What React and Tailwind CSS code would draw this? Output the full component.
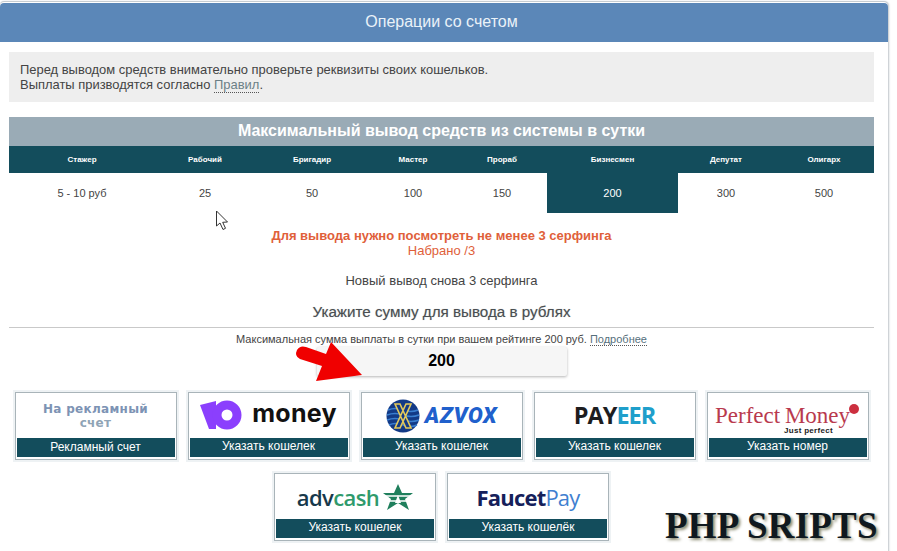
const levels = [
  ["Стажер", "5 - 10 руб"],
  ["Рабочий", "25"],
  ["Бригадир", "50"],
  ["Мастер", "100"],
  ["Прораб", "150"],
  ["Бизнесмен", "200", true],
  ["Депутат", "300"],
  ["Олигарх", "500"],
];

const cols = "grid grid-cols-[146px_100px_114px_88px_90px_131px_96px_100px]";

function Card({ label, children, barClass = "" }) {
  return (
    <div className="w-[162px] h-[68px] border border-[#a9b4b9] bg-white p-px shadow-[0_0_0_2px_#eef2f4] flex flex-col">
      <div className="h-[44px] flex items-center justify-center overflow-hidden">{children}</div>
      <div className={`h-[19px] bg-[#134d5c] text-white text-[12px] leading-[17px] text-center ${barClass}`}>{label}</div>
    </div>
  );
}

function YooMoney() {
  return (
    <div className="flex items-center gap-[10px] -mt-[3px]">
      <svg width="42" height="30" viewBox="0 0 42 30">
        <path d="M0 5 L16 1 L16 29 L9 29 Z" fill="#8b3ffd" />
        <circle cx="27" cy="15" r="10" fill="none" stroke="#8b3ffd" strokeWidth="9" />
      </svg>
      <span className="font-['Inter',sans-serif] font-bold text-[25px] leading-none text-[#111] tracking-[0.3px] pb-[3px]">money</span>
    </div>
  );
}

function Azvox() {
  return (
    <div className="flex items-center gap-[5px]">
      <svg width="34" height="34" viewBox="0 0 34 34">
        <circle cx="17" cy="17" r="16.5" fill="#123a86" />
        <path d="M2 11 Q9 8 17 11 T32 11 M1 16 Q9 13 17 16 T33 16 M1 21 Q9 18 17 21 T33 21 M3 26 Q9 23 17 26 T31 26" fill="none" stroke="#3a7fd0" strokeWidth="1.5" />
        <path d="M9 5 L14 5 L25 29 L20 29 Z M20 5 L25 5 L14 29 L9 29 Z" fill="#123a86" stroke="#e3c95b" strokeWidth="1.6" />
      </svg>
      <span className="font-['Roboto',sans-serif] font-black italic text-[22px] leading-none text-[#2060cc] tracking-[0.6px]">AZVOX</span>
    </div>
  );
}

function Payeer() {
  return (
    <span className="font-['Open_Sans',sans-serif] font-bold text-[23.5px] leading-none tracking-[-1px]">
      <span className="text-[#1d1d1f]">PAY</span>
      <span className="text-[#1f9fcb]">EER</span>
    </span>
  );
}

function PerfectMoney() {
  return (
    <div className="relative w-[145px] h-[40px] -mt-[1px] font-['Liberation_Serif',serif] text-[#b93a4e]">
      <span className="absolute left-0 top-[9px] text-[23px] leading-[21px] whitespace-nowrap [word-spacing:-1px]">Perfect Money</span>
      <span className="absolute left-[69px] top-[31px] font-['Liberation_Sans',sans-serif] font-bold text-[8px] leading-none tracking-[0.3px] text-[#222] whitespace-nowrap">Just perfect</span>
      <span className="absolute left-[134px] top-[8px] w-[10px] h-[10px] rounded-full bg-[#cc2f3f]" />
    </div>
  );
}

function Advcash() {
  return (
    <div className="flex items-center gap-[4px]">
      <span className="font-['Open_Sans',sans-serif] font-semibold text-[22px] leading-none tracking-[-0.6px]">
        <span className="text-[#17394b]">adv</span>
        <span className="text-[#2f9a6c]">cash</span>
      </span>
      <svg width="30" height="27" viewBox="0 0 30 27">
        <path d="M15 0 L19 9 L30 9 L22 15 L26 26 L15 19 L4 26 L8 15 L0 9 L11 9 Z" fill="#1f7f5c" />
        <path d="M0 12 H30 M2 17 H28" stroke="#fff" strokeWidth="1.4" />
        <path d="M15 11 L12 19 H18 Z" fill="#fff" />
      </svg>
    </div>
  );
}

function FaucetPay() {
  return (
    <span className="font-['Open_Sans',sans-serif] text-[22px] leading-none tracking-[-0.8px]">
      <span className="font-bold text-[#15205a]">Faucet</span>
      <span className="text-[#3f80d0]">Pay</span>
    </span>
  );
}

export default function App() {
  return (
    <div className="relative w-[897px] h-[551px] overflow-hidden bg-white font-['Liberation_Sans',Arial,sans-serif] text-[#444]">
      <div className="w-[888px] h-[600px] mt-[2px] rounded-t-[4px] shadow-[1px_0_2px_#bfc5ca,0_-1px_1px_#c4cad0] pt-px">
        <div className="h-[39px] bg-[#5b87b8] rounded-t-[4px] pr-[5px] text-[#eaf2f8] text-[16px] leading-[38px] text-center">
          Операции со счетом
        </div>

        <div className="ml-[9px] mr-[14px]">
          <div className="mt-[10px] h-[50px] bg-[#eeeeee] px-[11px] pt-[10px] text-[12.95px] leading-[15px]">
            Перед выводом средств внимательно проверьте реквизиты своих кошельков.
            <br />
            Выплаты призводятся согласно{" "}
            <a className="text-[#6b7f86] border-b border-dotted border-[#555]">Правил</a>.
          </div>

          <div className="mt-[15px]">
            <div className="h-[29px] bg-[#9aabb6] text-white font-bold text-[16px] leading-[28px] text-center">
              Максимальный вывод средств из системы в сутки
            </div>
            <div className={`${cols} h-[27px] bg-[#134d5c] text-white font-bold text-[8px] leading-[27px] text-center`}>
              {levels.map(([name]) => (
                <div key={name}>{name}</div>
              ))}
            </div>
            <div className={`${cols} h-[40px] text-[11px] leading-[40px] text-center`}>
              {levels.map(([name, val, active]) => (
                <div key={name} className={active ? "bg-[#134d5c] text-white" : ""}>{val}</div>
              ))}
            </div>
          </div>

          <div className="mt-[15px] text-center text-[#e0603a] text-[13px] leading-[15px]">
            <div className="font-bold">Для вывода нужно посмотреть не менее 3 серфинга</div>
            <div>Набрано /3</div>
          </div>
          <div className="mt-[15px] text-center text-[13px] leading-[15px]">Новый вывод снова 3 серфинга</div>
          <div className="mt-[15px] text-center text-[15.2px] leading-[18px] text-[#4a4f52] [text-shadow:0_0_1px_#bbb]">Укажите сумму для вывода в рублях</div>

          <div className="mt-[6px] border-t border-[#c9c9c9] pt-[5px] text-center text-[11px] leading-[13px]">
            Максимальная сумма выплаты в сутки при вашем рейтинге 200 руб.{" "}
            <a className="text-[#56707c] border-b border-dotted border-[#555]">Подробнее</a>
          </div>

          <div className="mx-auto mt-[1px] w-[250px] h-[29px] bg-[#f6f6f6] rounded-[2px] shadow-[0_1px_3px_#b5b5b5] text-black font-bold text-[16px] leading-[28px] text-center">
            200
          </div>

          <div className="mt-[16px] flex flex-wrap justify-center gap-x-[11px] gap-y-[13px]">
            <Card label="Рекламный счет" barClass="pt-px">
              <div className="font-['DejaVu_Sans',sans-serif] font-bold text-[12px] leading-[14px] tracking-[0.3px] text-center text-[#7d93b4]">
                На рекламный<br /><span className="text-[#8fa4b6]">счет</span>
              </div>
            </Card>
            <Card label="Указать кошелек"><YooMoney /></Card>
            <Card label="Указать кошелек"><Azvox /></Card>
            <Card label="Указать кошелек"><Payeer /></Card>
            <Card label="Указать номер"><PerfectMoney /></Card>
            <Card label="Указать кошелек"><Advcash /></Card>
            <Card label="Указать кошелёк"><FaucetPay /></Card>
          </div>
        </div>
      </div>

      {/* mouse pointer */}
      <svg className="absolute left-[215px] top-[210px]" width="16" height="21" viewBox="0 0 16 21">
        <path d="M1.5 1 V16 L5 13 L8 19.5 L10.5 18.3 L7.7 12.3 L12.5 12 Z" fill="#fff" stroke="#333" strokeWidth="1" />
      </svg>

      {/* red annotation arrow */}
      <svg className="absolute left-[290px] top-[335px]" width="80" height="52" viewBox="0 0 80 52">
        <path d="M41 7 L72 40 L26 46 L32 31 L10 24 Q4 21 7 15 Q10 10 16 12 L36 19 Z" fill="#f00000" />
      </svg>

      {/* watermark */}
      <div className="absolute left-[665px] top-[505px] font-['Liberation_Serif',serif] font-bold text-[37px] leading-[42px] tracking-[0.2px] text-[#10191f] whitespace-nowrap [text-shadow:2px_2px_3px_#8a8a70]">
        PHP SRIPTS
      </div>
    </div>
  );
}
